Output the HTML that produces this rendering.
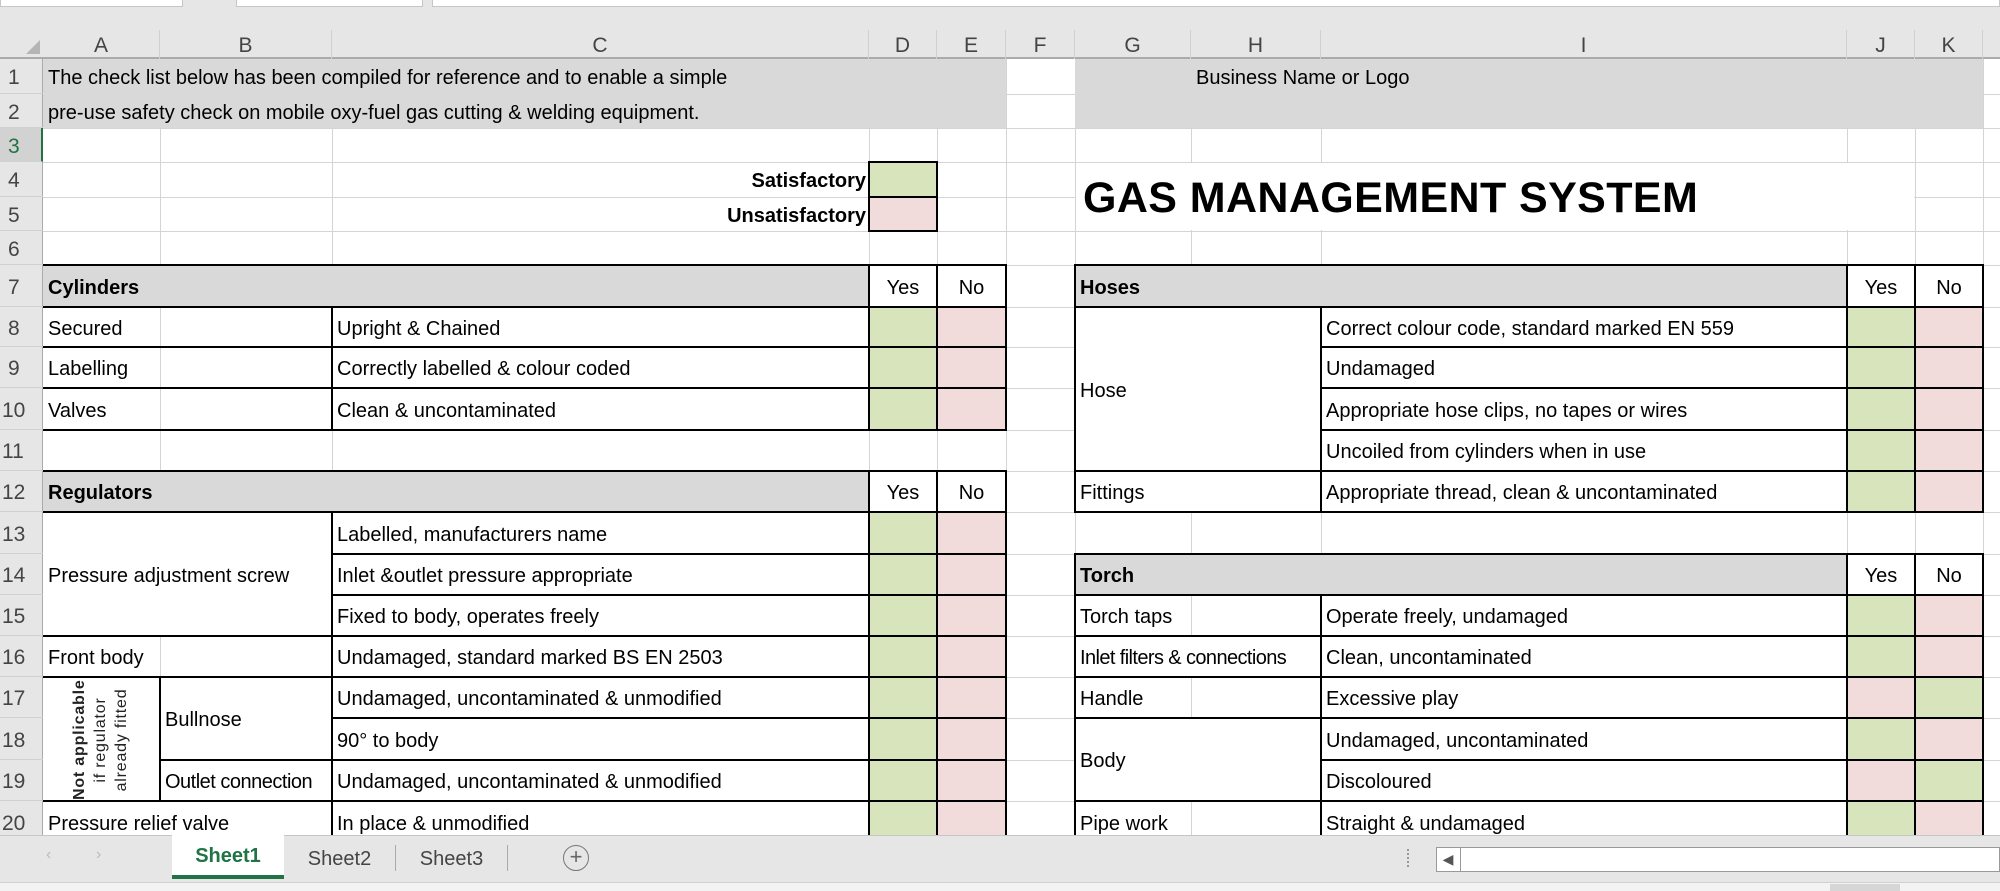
<!DOCTYPE html>
<html><head><meta charset="utf-8">
<style>
*{margin:0;padding:0;box-sizing:border-box}
body{width:2000px;height:891px;overflow:hidden;background:#e6e6e6;font-family:"Liberation Sans",sans-serif;position:relative;color:#000}
.a{position:absolute}
#sheet{position:absolute;left:0;top:0;width:2000px;height:835px;overflow:hidden}
.gv{position:absolute;width:1px;background:#d4d4d4}
.gh{position:absolute;height:1px;background:#d4d4d4}
.bv{position:absolute;width:2px;background:#000}
.bh{position:absolute;height:2px;background:#000}
.t{position:absolute;font-size:20px;white-space:nowrap;display:flex;align-items:center;padding:4px 5px 0}
.b{font-weight:bold}
.w{background:#fff}
.g{background:#d9d9d9}
.gr{background:#d8e4bc}
.pk{background:#f2dcdb}
.ch{position:absolute;top:30px;height:29px;font-size:21px;color:#444;text-align:center;line-height:32px;border-right:1px solid #d0d0d0}
.rh{position:absolute;left:0;width:43px;font-size:21px;color:#444;padding-left:8px;display:flex;align-items:center;border-bottom:1px solid #d0d0d0;padding-top:4px}
</style></head><body>
<div class="a" style="left:0;top:0;width:183px;height:7px;background:#fff;border:1px solid #c6c6c6;border-top:none"></div>
<div class="a" style="left:236px;top:0;width:187px;height:7px;background:#fff;border:1px solid #c6c6c6;border-top:none"></div>
<div class="a" style="left:432px;top:0;width:1568px;height:7px;background:#fff;border:1px solid #c6c6c6;border-top:none"></div>

<div id="sheet">
<div class="a w" style="left:43px;top:59px;width:1940px;height:776px"></div>
<div class="a" style="left:1983px;top:59px;width:17px;height:776px;background:#fff"></div>
<div class="gv" style="left:160px;top:59px;height:776px"></div>
<div class="gv" style="left:332px;top:59px;height:776px"></div>
<div class="gv" style="left:869px;top:59px;height:776px"></div>
<div class="gv" style="left:937px;top:59px;height:776px"></div>
<div class="gv" style="left:1006px;top:59px;height:776px"></div>
<div class="gv" style="left:1075px;top:59px;height:776px"></div>
<div class="gv" style="left:1191px;top:59px;height:776px"></div>
<div class="gv" style="left:1321px;top:59px;height:776px"></div>
<div class="gv" style="left:1847px;top:59px;height:776px"></div>
<div class="gv" style="left:1915px;top:59px;height:776px"></div>
<div class="gv" style="left:1983px;top:59px;height:776px"></div>
<div class="gh" style="left:43px;top:94px;width:1957px"></div>
<div class="gh" style="left:43px;top:128px;width:1957px"></div>
<div class="gh" style="left:43px;top:162px;width:1957px"></div>
<div class="gh" style="left:43px;top:197px;width:1957px"></div>
<div class="gh" style="left:43px;top:231px;width:1957px"></div>
<div class="gh" style="left:43px;top:265px;width:1957px"></div>
<div class="gh" style="left:43px;top:307px;width:1957px"></div>
<div class="gh" style="left:43px;top:347px;width:1957px"></div>
<div class="gh" style="left:43px;top:388px;width:1957px"></div>
<div class="gh" style="left:43px;top:430px;width:1957px"></div>
<div class="gh" style="left:43px;top:471px;width:1957px"></div>
<div class="gh" style="left:43px;top:512px;width:1957px"></div>
<div class="gh" style="left:43px;top:554px;width:1957px"></div>
<div class="gh" style="left:43px;top:595px;width:1957px"></div>
<div class="gh" style="left:43px;top:636px;width:1957px"></div>
<div class="gh" style="left:43px;top:677px;width:1957px"></div>
<div class="gh" style="left:43px;top:718px;width:1957px"></div>
<div class="gh" style="left:43px;top:760px;width:1957px"></div>
<div class="gh" style="left:43px;top:801px;width:1957px"></div>

<div class="a g" style="left:43px;top:59px;width:963px;height:69px"></div>
<div class="a g" style="left:1075px;top:59px;width:908px;height:69px"></div>
<div class="a w" style="left:1076px;top:163px;width:838px;height:67px"></div>
<div class="a g" style="left:43px;top:265px;width:826px;height:42px"></div>
<div class="a g" style="left:43px;top:471px;width:826px;height:41px"></div>
<div class="a g" style="left:1075px;top:265px;width:772px;height:42px"></div>
<div class="a g" style="left:1075px;top:554px;width:772px;height:41px"></div>
<div class="a w" style="left:869px;top:265px;width:137px;height:42px"></div>
<div class="a w" style="left:869px;top:471px;width:137px;height:41px"></div>
<div class="a w" style="left:1847px;top:265px;width:136px;height:42px"></div>
<div class="a w" style="left:1847px;top:554px;width:136px;height:41px"></div>
<div class="a w" style="left:43px;top:512px;width:289px;height:124px"></div>
<div class="a w" style="left:43px;top:677px;width:117px;height:124px"></div>
<div class="a w" style="left:160px;top:677px;width:172px;height:83px"></div>
<div class="a w" style="left:43px;top:801px;width:289px;height:40px"></div>
<div class="a w" style="left:1075px;top:307px;width:246px;height:205px"></div>
<div class="a w" style="left:1075px;top:471px;width:246px;height:41px"></div>
<div class="a w" style="left:1075px;top:636px;width:246px;height:41px"></div>
<div class="a w" style="left:1075px;top:718px;width:246px;height:83px"></div>

<div class="a gr" style="left:869px;top:162px;width:68px;height:35px"></div>
<div class="a pk" style="left:869px;top:197px;width:68px;height:34px"></div>
<div class="a gr" style="left:869px;top:307px;width:68px;height:123px"></div>
<div class="a pk" style="left:937px;top:307px;width:69px;height:123px"></div>
<div class="a gr" style="left:869px;top:512px;width:68px;height:330px"></div>
<div class="a pk" style="left:937px;top:512px;width:69px;height:330px"></div>
<div class="a gr" style="left:1847px;top:307px;width:68px;height:205px"></div>
<div class="a pk" style="left:1915px;top:307px;width:68px;height:205px"></div>
<div class="a gr" style="left:1847px;top:595px;width:68px;height:82px"></div>
<div class="a pk" style="left:1915px;top:595px;width:68px;height:82px"></div>
<div class="a pk" style="left:1847px;top:677px;width:68px;height:41px"></div>
<div class="a gr" style="left:1915px;top:677px;width:68px;height:41px"></div>
<div class="a gr" style="left:1847px;top:718px;width:68px;height:42px"></div>
<div class="a pk" style="left:1915px;top:718px;width:68px;height:42px"></div>
<div class="a pk" style="left:1847px;top:760px;width:68px;height:41px"></div>
<div class="a gr" style="left:1915px;top:760px;width:68px;height:41px"></div>
<div class="a gr" style="left:1847px;top:801px;width:68px;height:40px"></div>
<div class="a pk" style="left:1915px;top:801px;width:68px;height:40px"></div>

<div class="bv" style="left:868px;top:161px;height:71px"></div>
<div class="bv" style="left:936px;top:161px;height:71px"></div>
<div class="bh" style="left:868px;top:161px;width:70px"></div>
<div class="bh" style="left:868px;top:196px;width:70px"></div>
<div class="bh" style="left:868px;top:230px;width:70px"></div>

<div class="bh" style="left:43px;top:264px;width:964px"></div>
<div class="bh" style="left:43px;top:306px;width:964px"></div>
<div class="bh" style="left:43px;top:346px;width:964px"></div>
<div class="bh" style="left:43px;top:387px;width:964px"></div>
<div class="bh" style="left:43px;top:429px;width:964px"></div>
<div class="bh" style="left:43px;top:470px;width:964px"></div>
<div class="bh" style="left:43px;top:511px;width:964px"></div>
<div class="bh" style="left:331px;top:553px;width:676px"></div>
<div class="bh" style="left:331px;top:594px;width:676px"></div>
<div class="bh" style="left:43px;top:635px;width:964px"></div>
<div class="bh" style="left:43px;top:676px;width:964px"></div>
<div class="bh" style="left:331px;top:717px;width:676px"></div>
<div class="bh" style="left:159px;top:759px;width:848px"></div>
<div class="bh" style="left:43px;top:800px;width:964px"></div>
<div class="bv" style="left:868px;top:264px;height:167px"></div>
<div class="bv" style="left:936px;top:264px;height:167px"></div>
<div class="bv" style="left:1005px;top:264px;height:167px"></div>
<div class="bv" style="left:868px;top:470px;height:370px"></div>
<div class="bv" style="left:936px;top:470px;height:370px"></div>
<div class="bv" style="left:1005px;top:470px;height:370px"></div>
<div class="bv" style="left:331px;top:306px;height:125px"></div>
<div class="bv" style="left:331px;top:511px;height:330px"></div>
<div class="bv" style="left:159px;top:676px;height:126px"></div>

<div class="bh" style="left:1074px;top:264px;width:910px"></div>
<div class="bh" style="left:1074px;top:306px;width:910px"></div>
<div class="bh" style="left:1320px;top:346px;width:664px"></div>
<div class="bh" style="left:1320px;top:387px;width:664px"></div>
<div class="bh" style="left:1320px;top:429px;width:664px"></div>
<div class="bh" style="left:1074px;top:470px;width:910px"></div>
<div class="bh" style="left:1074px;top:511px;width:910px"></div>
<div class="bh" style="left:1074px;top:553px;width:910px"></div>
<div class="bh" style="left:1074px;top:594px;width:910px"></div>
<div class="bh" style="left:1074px;top:635px;width:910px"></div>
<div class="bh" style="left:1074px;top:676px;width:910px"></div>
<div class="bh" style="left:1074px;top:717px;width:910px"></div>
<div class="bh" style="left:1320px;top:759px;width:664px"></div>
<div class="bh" style="left:1074px;top:800px;width:910px"></div>
<div class="bv" style="left:1074px;top:264px;height:249px"></div>
<div class="bv" style="left:1846px;top:264px;height:249px"></div>
<div class="bv" style="left:1914px;top:264px;height:249px"></div>
<div class="bv" style="left:1982px;top:264px;height:249px"></div>
<div class="bv" style="left:1320px;top:306px;height:207px"></div>
<div class="bv" style="left:1074px;top:553px;height:290px"></div>
<div class="bv" style="left:1846px;top:553px;height:290px"></div>
<div class="bv" style="left:1914px;top:553px;height:290px"></div>
<div class="bv" style="left:1982px;top:553px;height:290px"></div>
<div class="bv" style="left:1320px;top:594px;height:249px"></div>

<div class="t" style="left:43px;top:59px;height:35px">The check list below has been compiled for reference and to enable a simple</div>
<div class="t" style="left:43px;top:94px;height:34px">pre-use safety check on mobile oxy-fuel gas cutting &amp; welding equipment.</div>
<div class="t" style="left:1191px;top:59px;height:35px">Business Name or Logo</div>
<div class="t b" style="left:332px;top:162px;width:537px;height:35px;justify-content:flex-end;padding-right:3px">Satisfactory</div>
<div class="t b" style="left:332px;top:197px;width:537px;height:34px;justify-content:flex-end;padding-right:3px">Unsatisfactory</div>
<div class="t b" style="left:1078px;top:162px;height:69px;font-size:43px;letter-spacing:0.4px;padding-top:4px">GAS MANAGEMENT SYSTEM</div>

<div class="t b" style="left:43px;top:265px;height:42px">Cylinders</div>
<div class="t" style="left:869px;top:265px;width:68px;height:42px;justify-content:center">Yes</div>
<div class="t" style="left:937px;top:265px;width:69px;height:42px;justify-content:center">No</div>
<div class="t" style="left:43px;top:307px;height:40px">Secured</div>
<div class="t" style="left:332px;top:307px;height:40px">Upright &amp; Chained</div>
<div class="t" style="left:43px;top:347px;height:41px">Labelling</div>
<div class="t" style="left:332px;top:347px;height:41px">Correctly labelled &amp; colour coded</div>
<div class="t" style="left:43px;top:388px;height:42px">Valves</div>
<div class="t" style="left:332px;top:388px;height:42px">Clean &amp; uncontaminated</div>

<div class="t b" style="left:43px;top:471px;height:41px">Regulators</div>
<div class="t" style="left:869px;top:471px;width:68px;height:41px;justify-content:center">Yes</div>
<div class="t" style="left:937px;top:471px;width:69px;height:41px;justify-content:center">No</div>
<div class="t" style="left:43px;top:512px;height:124px">Pressure adjustment screw</div>
<div class="t" style="left:332px;top:512px;height:42px">Labelled, manufacturers name</div>
<div class="t" style="left:332px;top:554px;height:41px">Inlet &amp;outlet pressure appropriate</div>
<div class="t" style="left:332px;top:595px;height:41px">Fixed to body, operates freely</div>
<div class="t" style="left:43px;top:636px;height:41px">Front body</div>
<div class="t" style="left:332px;top:636px;height:41px">Undamaged, standard marked BS EN 2503</div>
<div class="a" style="left:41px;top:708px;width:120px;height:64px;transform:rotate(-90deg);font-size:16px;line-height:21px;text-align:center;color:#222;white-space:nowrap;letter-spacing:0.8px"><b>Not applicable</b><br>if regulator<br>already fitted</div>
<div class="t" style="left:160px;top:677px;height:83px">Bullnose</div>
<div class="t" style="left:332px;top:677px;height:41px">Undamaged, uncontaminated &amp; unmodified</div>
<div class="t" style="left:332px;top:718px;height:42px">90° to body</div>
<div class="t" style="left:160px;top:760px;height:41px;letter-spacing:-0.5px">Outlet connection</div>
<div class="t" style="left:332px;top:760px;height:41px">Undamaged, uncontaminated &amp; unmodified</div>
<div class="t" style="left:43px;top:801px;height:42px">Pressure relief valve</div>
<div class="t" style="left:332px;top:801px;height:42px">In place &amp; unmodified</div>

<div class="t b" style="left:1075px;top:265px;height:42px">Hoses</div>
<div class="t" style="left:1847px;top:265px;width:68px;height:42px;justify-content:center">Yes</div>
<div class="t" style="left:1915px;top:265px;width:68px;height:42px;justify-content:center">No</div>
<div class="t" style="left:1075px;top:307px;height:164px">Hose</div>
<div class="t" style="left:1321px;top:307px;height:40px">Correct colour code, standard marked EN 559</div>
<div class="t" style="left:1321px;top:347px;height:41px">Undamaged</div>
<div class="t" style="left:1321px;top:388px;height:42px">Appropriate hose clips, no tapes or wires</div>
<div class="t" style="left:1321px;top:430px;height:41px">Uncoiled from cylinders when in use</div>
<div class="t" style="left:1075px;top:471px;height:41px">Fittings</div>
<div class="t" style="left:1321px;top:471px;height:41px">Appropriate thread, clean &amp; uncontaminated</div>
<div class="t b" style="left:1075px;top:554px;height:41px">Torch</div>
<div class="t" style="left:1847px;top:554px;width:68px;height:41px;justify-content:center">Yes</div>
<div class="t" style="left:1915px;top:554px;width:68px;height:41px;justify-content:center">No</div>
<div class="t" style="left:1075px;top:595px;height:41px">Torch taps</div>
<div class="t" style="left:1321px;top:595px;height:41px">Operate freely, undamaged</div>
<div class="t" style="left:1075px;top:636px;height:41px;letter-spacing:-0.6px">Inlet filters &amp; connections</div>
<div class="t" style="left:1321px;top:636px;height:41px">Clean, uncontaminated</div>
<div class="t" style="left:1075px;top:677px;height:41px">Handle</div>
<div class="t" style="left:1321px;top:677px;height:41px">Excessive play</div>
<div class="t" style="left:1075px;top:718px;height:83px">Body</div>
<div class="t" style="left:1321px;top:718px;height:42px">Undamaged, uncontaminated</div>
<div class="t" style="left:1321px;top:760px;height:41px">Discoloured</div>
<div class="t" style="left:1075px;top:801px;height:42px">Pipe work</div>
<div class="t" style="left:1321px;top:801px;height:42px">Straight &amp; undamaged</div>

<div class="a" style="left:0;top:30px;width:2000px;height:29px;background:#e6e6e6;border-bottom:2px solid #ababab"></div>
<div class="a" style="left:26px;top:40px;width:0;height:0;border-left:14px solid transparent;border-bottom:14px solid #b5b5b5"></div>
<div class="ch" style="left:43px;width:117px">A</div>
<div class="ch" style="left:160px;width:172px">B</div>
<div class="ch" style="left:332px;width:537px">C</div>
<div class="ch" style="left:869px;width:68px">D</div>
<div class="ch" style="left:937px;width:69px">E</div>
<div class="ch" style="left:1006px;width:69px">F</div>
<div class="ch" style="left:1075px;width:116px">G</div>
<div class="ch" style="left:1191px;width:130px">H</div>
<div class="ch" style="left:1321px;width:526px">I</div>
<div class="ch" style="left:1847px;width:68px">J</div>
<div class="ch" style="left:1915px;width:68px">K</div>
<div class="a" style="left:0;top:59px;width:43px;height:776px;background:#e6e6e6;border-right:1px solid #ababab"></div>
<div class="rh" style="top:59px;height:35px">1</div>
<div class="rh" style="top:94px;height:34px">2</div>
<div class="rh" style="top:128px;height:34px;background:#d2d2d2;color:#217346;border-right:2px solid #217346">3</div>
<div class="rh" style="top:162px;height:35px">4</div>
<div class="rh" style="top:197px;height:34px">5</div>
<div class="rh" style="top:231px;height:34px">6</div>
<div class="rh" style="top:265px;height:42px">7</div>
<div class="rh" style="top:307px;height:40px">8</div>
<div class="rh" style="top:347px;height:41px">9</div>
<div class="rh" style="top:388px;height:42px;padding-left:2px">10</div>
<div class="rh" style="top:430px;height:41px;padding-left:2px">11</div>
<div class="rh" style="top:471px;height:41px;padding-left:2px">12</div>
<div class="rh" style="top:512px;height:42px;padding-left:2px">13</div>
<div class="rh" style="top:554px;height:41px;padding-left:2px">14</div>
<div class="rh" style="top:595px;height:41px;padding-left:2px">15</div>
<div class="rh" style="top:636px;height:41px;padding-left:2px">16</div>
<div class="rh" style="top:677px;height:41px;padding-left:2px">17</div>
<div class="rh" style="top:718px;height:42px;padding-left:2px">18</div>
<div class="rh" style="top:760px;height:41px;padding-left:2px">19</div>
<div class="rh" style="top:801px;height:42px;padding-left:2px">20</div>
</div>

<div class="a" style="left:0;top:835px;width:2000px;height:47px;background:#e6e6e6;border-top:1px solid #c6c6c6"></div>
<div class="a" style="left:46px;top:846px;font-size:16px;color:#bbb">&#8249;</div>
<div class="a" style="left:96px;top:846px;font-size:16px;color:#bbb">&#8250;</div>
<div class="a" style="left:172px;top:835px;width:112px;height:44px;background:#fff;border-bottom:4px solid #217346;text-align:center;font-size:20px;font-weight:bold;color:#217346;line-height:42px">Sheet1</div>
<div class="a" style="left:284px;top:845px;width:112px;height:26px;text-align:center;font-size:20px;color:#444;line-height:28px;border-right:1px solid #aaa">Sheet2</div>
<div class="a" style="left:396px;top:845px;width:112px;height:26px;text-align:center;font-size:20px;color:#444;line-height:28px;border-right:1px solid #aaa">Sheet3</div>
<div class="a" style="left:563px;top:845px;width:26px;height:26px;border:1.5px solid #777;border-radius:50%;text-align:center;line-height:22px;font-size:22px;color:#666">+</div>
<div class="a" style="left:1407px;top:849px;width:2px;height:18px;border-left:2px dotted #999"></div>
<div class="a" style="left:1436px;top:847px;width:564px;height:25px;background:#fff;border:1.5px solid #999"></div>
<div class="a" style="left:1436px;top:847px;width:25px;height:25px;border-right:1.5px solid #999;font-size:14px;color:#555;text-align:center;line-height:24px">&#9664;</div>
<div class="a" style="left:0;top:882px;width:2000px;height:9px;background:#f3f3f3;border-top:1px solid #d0d0d0"></div>
<div class="a" style="left:1830px;top:884px;width:70px;height:7px;background:#d6d6d6"></div>
</body></html>
